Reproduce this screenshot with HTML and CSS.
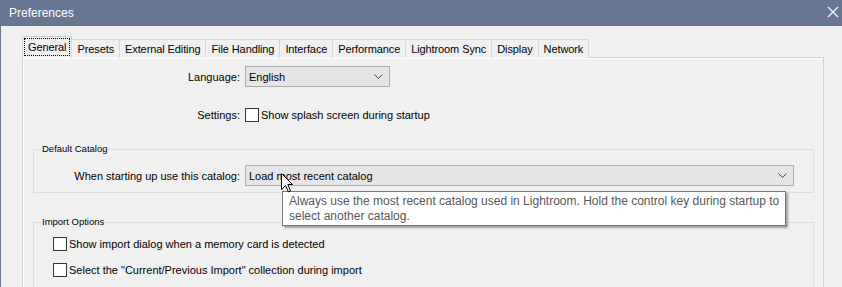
FILE: index.html
```html
<!DOCTYPE html>
<html>
<head>
<meta charset="utf-8">
<link rel="stylesheet" href="styles.css">
</head>
<body>
<div class="window">
  <div class="titlebar">
    <span class="title">Preferences</span>
    <svg class="close" width="12" height="12" viewBox="0 0 12 12"><path d="M1 1 L11 11 M11 1 L1 11" stroke="#fff" stroke-width="1.1" fill="none"/></svg>
  </div>
  <div class="content">
    <div class="tabs">
      <div class="tab selected"><span class="focus">General</span></div>
      <div class="tab">Presets</div>
      <div class="tab">External Editing</div>
      <div class="tab">File Handling</div>
      <div class="tab">Interface</div>
      <div class="tab">Performance</div>
      <div class="tab">Lightroom Sync</div>
      <div class="tab">Display</div>
      <div class="tab">Network</div>
    </div>
    <div class="panel">
      <div class="row">
        <div class="label">Language:</div>
        <div class="select lang"><span>English</span><svg class="chev" width="9" height="5" viewBox="0 0 9 5"><path d="M0.5 0.5 L4.5 4.5 L8.5 0.5" stroke="#444" fill="none"/></svg></div>
      </div>
      <div class="row settings">
        <div class="label">Settings:</div>
        <label class="check"><span class="box"></span>Show splash screen during startup</label>
      </div>
      <fieldset class="group catalog">
        <legend>Default Catalog</legend>
        <div class="row grouprow">
          <div class="label">When starting up use this catalog:</div>
          <div class="select wide"><span>Load most recent catalog</span><svg class="chev" width="9" height="5" viewBox="0 0 9 5"><path d="M0.5 0.5 L4.5 4.5 L8.5 0.5" stroke="#444" fill="none"/></svg></div>
        </div>
      </fieldset>
      <fieldset class="group import">
        <legend>Import Options</legend>
        <div class="checks">
          <label class="check"><span class="box"></span>Show import dialog when a memory card is detected</label>
          <label class="check"><span class="box"></span>Select the "Current/Previous Import" collection during import</label>
        </div>
      </fieldset>
    </div>
  </div>
  <div class="tooltip">Always use the most recent catalog used in Lightroom. Hold the control key during startup to<br>select another catalog.</div>
  <svg class="cursor" width="13" height="20" viewBox="0 0 13 20"><path d="M0.5 0.5 L0.5 16.5 L4.5 12.5 L7.5 19 L9.5 18 L6.8 11.5 L11.5 11.5 Z" fill="#fff" stroke="#000" stroke-width="1" stroke-linejoin="miter"/></svg>
</div>
</body>
</html>
```
FILE: styles.css
```css
html, body {
  margin: 0;
  padding: 0;
}
body {
  width: 842px;
  height: 287px;
  overflow: hidden;
  background: #f0f0f0;
  font-family: "Liberation Sans", Arial, sans-serif;
  font-size: 11px;
  color: #000;
}
.window {
  position: relative;
  height: 287px;
  border-left: 1px solid #677791;
  box-sizing: border-box;
}
.titlebar {
  height: 26px;
  background: #677791;
  display: flex;
  align-items: center;
  justify-content: space-between;
  padding: 0 3px 0 8px;
}
.title {
  color: #fff;
  font-size: 12px;
  line-height: 26px;
}
.close {
  margin-top: -2px;
}
.content {
  padding-left: 21px;
  padding-right: 18px;
}
.tabs {
  display: flex;
  align-items: flex-end;
  margin-top: 10px;
  height: 22px;
  position: relative;
  z-index: 2;
  margin-bottom: -1px;
}
.tab {
  height: 19px;
  box-sizing: border-box;
  border: 1px solid #d9d9d9;
  border-bottom: none;
  padding: 0 5px;
  line-height: 18px;
  margin-left: -1px;
  background: #f0f0f0;
  white-space: nowrap;
  letter-spacing: -0.1px;
}
.tab:first-child {
  margin-left: 0;
}
.tab.selected {
  height: 22px;
  padding: 1px 1px 0 1px;
  border-color: #d0d0d0;
  background: #f0f0f0;
}
.focus {
  display: block;
  border: 1px dotted #000;
  padding: 0 3px;
  line-height: 16px;
}
.panel {
  border: 1px solid #d0d0d0;
  box-shadow: inset 1px 1px 0 #fff;
  height: 240px;
  padding-top: 8px;
  padding-right: 9px;
  box-sizing: border-box;
}
.row {
  display: grid;
  grid-template-columns: 217px auto;
  column-gap: 5px;
  align-items: center;
  justify-content: start;
}
.label {
  text-align: right;
  white-space: nowrap;
}
.select {
  height: 21px;
  box-sizing: border-box;
  border: 1px solid #adadad;
  background: #e5e5e5;
  display: flex;
  align-items: center;
  justify-content: space-between;
  padding: 0 6px 0 3px;
}
.select.lang {
  width: 145px;
}
.select.wide {
  width: 549px;
}
.chev {
  display: block;
}
.settings {
  margin-top: 21px;
  height: 14px;
}
.check {
  display: flex;
  align-items: center;
  gap: 2px;
  white-space: nowrap;
  height: 14px;
}
.box {
  width: 14px;
  height: 14px;
  box-sizing: border-box;
  border: 1px solid #333;
  background: #fff;
  flex: none;
}
.group {
  margin: 20px 0 0 10px;
  padding: 0;
  border: 1px solid #dcdcdc;
  min-width: 0;
}
.group legend {
  font-size: 9.5px;
  line-height: 14px;
  padding: 0 1px;
  margin-left: 7px;
}
.grouprow {
  grid-template-columns: 206px auto;
  margin-top: 9px;
  margin-bottom: 6px;
}
.import {
  margin-top: 22px;
  height: 80px;
}
.checks {
  display: flex;
  flex-direction: column;
  gap: 12px;
  padding: 8px 0 0 19px;
}
.tooltip {
  position: absolute;
  left: 281px;
  top: 191px;
  width: 504px;
  height: 35px;
  box-sizing: border-box;
  background: #fff;
  border: 1px solid #767676;
  box-shadow: 2px 2px 2px rgba(0,0,0,0.35);
  padding: 2px 0 0 6px;
  font-size: 12px;
  line-height: 15px;
  color: #575757;
  white-space: nowrap;
  z-index: 5;
}
.cursor {
  position: absolute;
  left: 280px;
  top: 173px;
  z-index: 6;
}
```
